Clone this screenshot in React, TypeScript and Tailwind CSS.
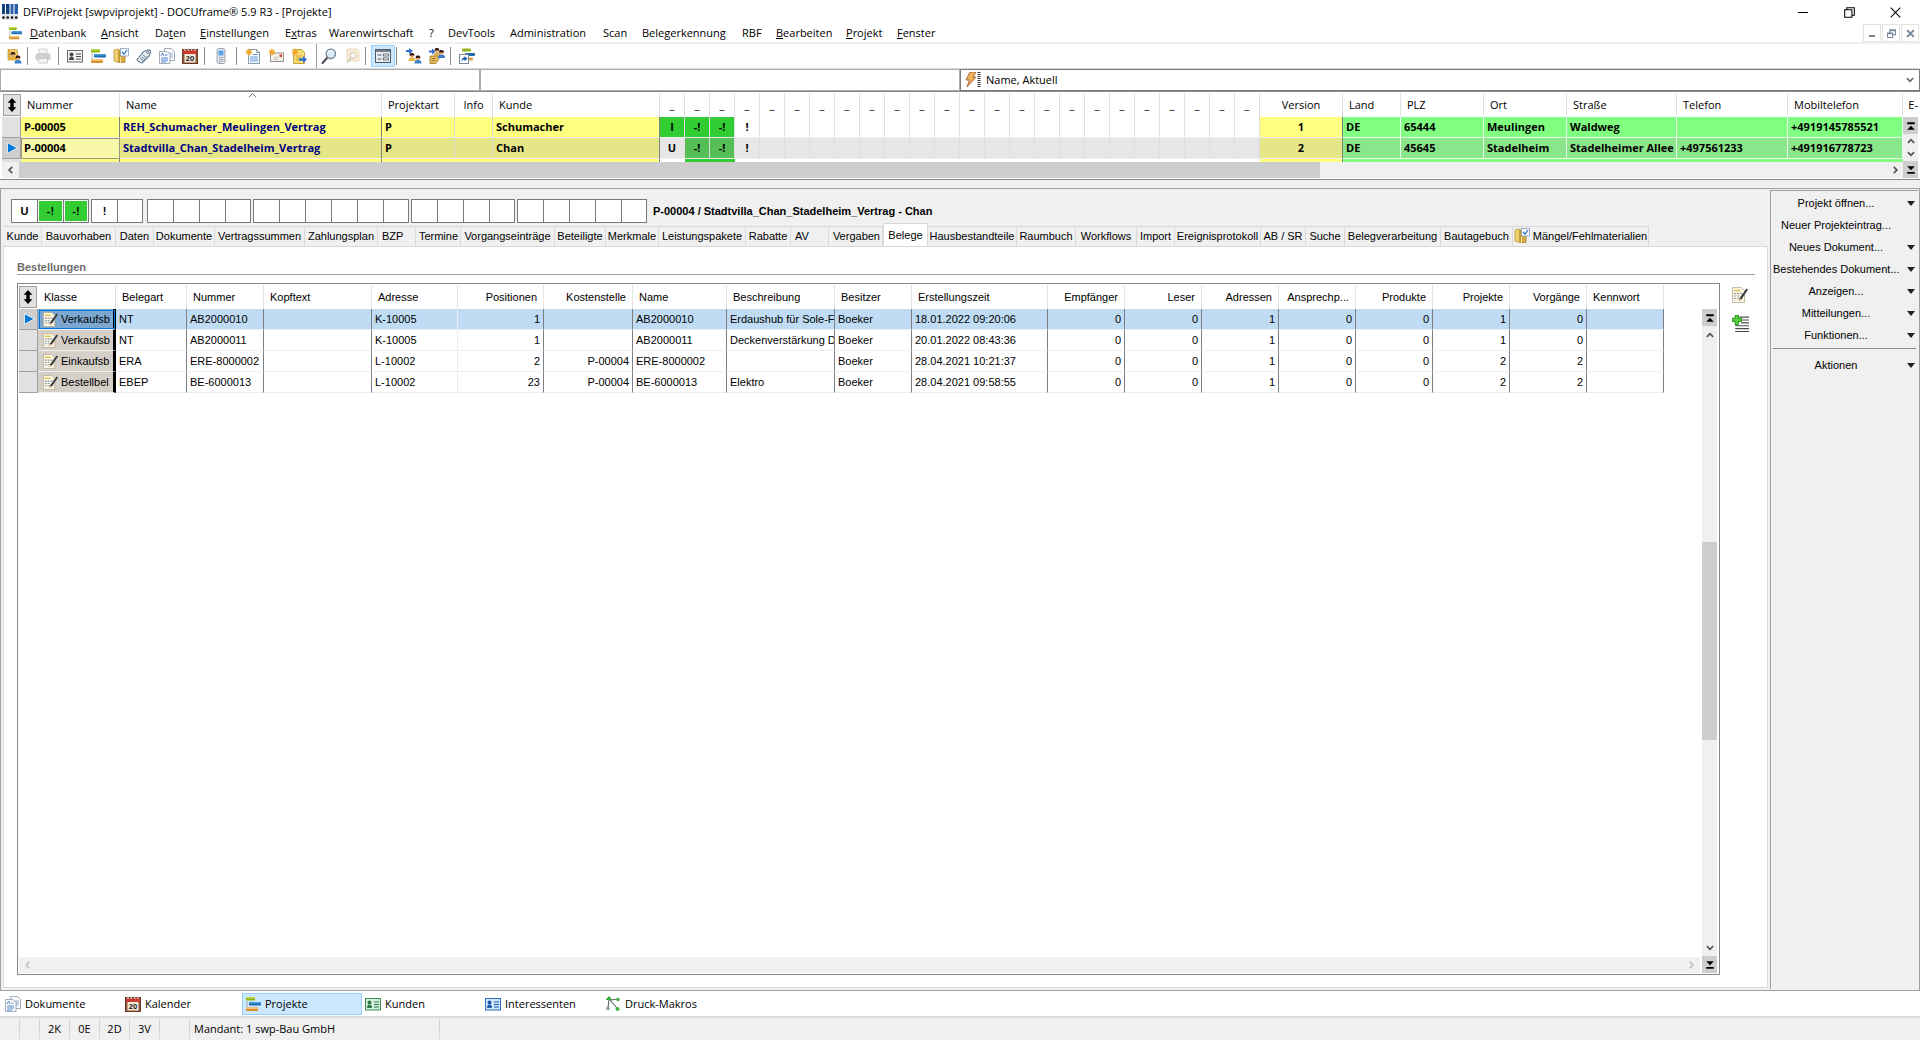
import type { ReactNode } from "react";

type Draw = { className?: string };

function Svg({ children, className = "size-4" }: { children: ReactNode; className?: string }) {
  return (
    <svg viewBox="0 0 16 16" className={`shrink-0 ${className}`} fill="none" aria-hidden="true">
      {children}
    </svg>
  );
}

/* ---------- icons ---------- */

const LogoIcon = () => (
  <Svg className="h-4 w-4">
    <path d="M0 0h3v10H0zM4 0h3.500v10H4z" fill="#15407f" />
    <path d="M8.500 0h3v10h-3zM12.500 0H16v10h-3.500z" fill="#2a5fae" />
    <path d="M0 10h16v6H0z" fill="#dfe3ea" />
    <circle cx="1.500" cy="13.500" r="1.300" fill="#111" />
    <circle cx="5.700" cy="13.500" r="1.300" fill="#111" />
    <circle cx="10" cy="13.500" r="1.300" fill="#111" />
    <circle cx="14.200" cy="13.500" r="1.300" fill="#111" />
  </Svg>
);

const ProjectsIcon = ({ className }: Draw) => (
  <Svg className={className}>
    <rect x="1" y="1" width="9" height="3.500" rx="1" fill="#8fb51c" />
    <rect x="1" y="1" width="9" height="1.500" rx="0.700" fill="#c3d94a" />
    <rect x="4" y="6" width="12" height="3.500" rx="1" fill="#1c6cae" />
    <rect x="4" y="6" width="12" height="1.500" rx="0.700" fill="#4a9fd8" />
    <path d="M2 5v8" stroke="#9aa3ad" strokeWidth="0.800" />
    <rect x="1" y="11.500" width="12" height="3.500" rx="1" fill="#d98e2b" />
    <rect x="1" y="11.500" width="12" height="1.500" rx="0.700" fill="#f2c377" />
  </Svg>
);

const Person = ({ x, y, shirt, hair = "#2e1a10" }: { x: number; y: number; shirt: string; hair?: string }) => (
  <g transform={`translate(${x} ${y})`}>
    <path d="M0 8c0-3 1.500-3.500 3.500-3.500S7 5 7 8z" fill={shirt} />
    <circle cx="3.500" cy="2.800" r="2" fill="#e3a878" />
    <path d="M1.200 3C.8.500 2 0 3.600 0S6.200.8 5.800 3C5 1.600 3 2.200 1.200 3z" fill={hair} />
  </g>
);

const LoginIcon = () => (
  <Svg>
    <path d="M2 1.500h8.500l1 1V12H2z" fill="#f0c766" stroke="#c2973a" strokeWidth="0.700" />
    <path d="M2 1.500h2V12H2z" fill="#d9a741" />
    <Person x={3.500} y={4} shirt="#e2b23a" />
    <Person x={8.500} y={7.500} shirt="#3f7fd0" />
  </Svg>
);

const PrinterIcon = () => (
  <Svg>
    <path d="M4 1h8v5H4z" fill="#f4f4f4" stroke="#c4c4c4" strokeWidth="0.800" />
    <rect x="1" y="6" width="14" height="6" rx="1.500" fill="#d2d2d2" stroke="#bcbcbc" strokeWidth="0.800" />
    <path d="M3.500 10.500h9V15h-9z" fill="#f3f3f3" stroke="#c4c4c4" strokeWidth="0.800" />
  </Svg>
);

const CardIcon = ({ fill = "#f2f2f2", edge = "#6d6d6d", ink = "#4a4a4a" }: { fill?: string; edge?: string; ink?: string }) => (
  <Svg>
    <rect x="0.500" y="2.500" width="15" height="11.500" fill={fill} stroke={edge} />
    <circle cx="4.500" cy="6.500" r="2" fill={ink} />
    <path d="M2 12c0-3 1-3.500 2.500-3.500S7 9 7 12z" fill={ink} />
    <path d="M9 6h5M9 8.500h5M9 11h5" stroke={ink} strokeWidth="1.200" />
  </Svg>
);

const FolderCheckIcon = () => (
  <Svg>
    <path d="M1 2l5-1v13.500l-5-1.500z" fill="#f0cf72" stroke="#b98d2a" strokeWidth="0.700" />
    <path d="M6 2.500h6v12H6z" fill="#d9a93c" stroke="#a87b1e" strokeWidth="0.700" />
    <path d="M7.500 9v6" stroke="#f7e3a3" />
    <rect x="7.500" y="0.500" width="8" height="7.500" fill="#f5faff" stroke="#8aa0b8" strokeWidth="0.800" />
    <path d="M9 4l2 2 3-4" stroke="#2670c0" strokeWidth="1.200" />
  </Svg>
);

const TagIcon = () => (
  <Svg>
    <path d="M1.500 11L8 3.500c1-1 5-2 6-1.500s0 5-1 6L6.500 14.500c-.6.600-1.500.6-2 0l-3-2c-.5-.400-.500-1 0-1.500z" fill="#eef3f8" stroke="#62788f" strokeWidth="1.100" />
    <circle cx="11.700" cy="4.500" r="1.200" fill="#fff" stroke="#4f6379" strokeWidth="0.900" />
    <path d="M4 10.500l3.500 2M5.500 9l3.500 2M7 7.200l3.500 2" stroke="#5f7890" strokeWidth="1" />
  </Svg>
);

const DocsIcon = () => (
  <Svg>
    <path d="M5.500.5h7l3 3v9h-10z" fill="#fbfcfe" stroke="#8b97a8" strokeWidth="0.800" />
    <path d="M9 5h5M9 7h5M9 9h5" stroke="#7aa0d0" strokeWidth="0.800" />
    <path d="M.5 3.500h7.500l3 3v9H.5z" fill="#fff" stroke="#8b97a8" strokeWidth="0.800" />
    <path d="M2 8l1.500-3L5 8M6 7h2.500M2 10h7M2 12h7M2 14h5" stroke="#3f6fc0" strokeWidth="0.900" />
    <path d="M6 10.500h3v3H6z" fill="#9fc0ea" />
  </Svg>
);

const CalendarIcon = () => (
  <Svg>
    <rect x="0.500" y="1.500" width="15" height="14" fill="#8f5a3f" stroke="#6b3a26" />
    <path d="M1 2h14v4H1z" fill="#c93b31" />
    <path d="M3 0v3M6.300 0v3M9.700 0v3M13 0v3" stroke="#d8d8d8" strokeWidth="1.200" />
    <path d="M2.500 6h11v8.500h-11z" fill="#f3ead9" />
    <text x="8" y="13" textAnchor="middle" fontSize="7.500" fontWeight="700" fill="#111" fontFamily="Liberation Sans">20</text>
  </Svg>
);

const PhoneIcon = () => (
  <Svg>
    <rect x="4" y="0.500" width="8" height="15" rx="2" fill="#e3e8ee" stroke="#9aa4b0" />
    <rect x="5.500" y="2.500" width="5" height="5" fill="#5aa2e6" />
    <path d="M6 9.500h1M7.600 9.500h1M9.200 9.500h1M6 11.500h1M7.600 11.500h1M9.200 11.500h1M6 13.300h1M7.600 13.300h1M9.200 13.300h1" stroke="#7d8896" />
  </Svg>
);

const Spark = () => (
  <path d="M4 0l.8 2.300L7 1.200 5.900 3.300 8 4.300l-2.200.8L6.800 7 4.700 6.100 4 8.300l-.8-2.200L1 7l1.100-2L0 4.300l2.100-.9L1 1.300l2.200 1z" fill="#f2a62a" />
);

const NewDocIcon = () => (
  <Svg>
    <path d="M3.500 1.500h8l3 3v11h-11z" fill="#fbfcfe" stroke="#7c8ba0" strokeWidth="0.900" />
    <path d="M11.500 1.500v3h3" stroke="#7c8ba0" strokeWidth="0.800" />
    <path d="M8 6.500h5M5 9h8M5 11h8M5 13h8" stroke="#5e97d6" />
    <Spark />
  </Svg>
);

const NewMailIcon = () => (
  <Svg>
    <rect x="2.500" y="5" width="13" height="8.500" fill="#f3f0ea" stroke="#9b9389" />
    <rect x="11.500" y="6.500" width="2.500" height="2.500" fill="#d0433a" />
    <path d="M6 9.500h4M6 11.300h4" stroke="#b5aea3" strokeWidth="0.800" />
    <Spark />
  </Svg>
);

const NewNoteIcon = () => (
  <Svg>
    <path d="M2.500 1.500h8l3 3v11h-11z" fill="#f7dc74" stroke="#c09a2b" strokeWidth="0.900" />
    <path d="M5 8h6M5 10h4M5 12h4" stroke="#c9a33a" />
    <path d="M8 10.300h4V8l4 3.500-4 3.500v-2.300H8z" fill="#2f6fce" />
    <Spark />
  </Svg>
);

const SearchIcon = () => (
  <Svg>
    <path d="M6.500 9.500L1.500 15" stroke="#4a4f57" strokeWidth="2" strokeLinecap="round" />
    <circle cx="9.800" cy="5.800" r="4.700" fill="#d9ecfb" stroke="#6b7f95" strokeWidth="1.300" />
    <path d="M7 5c.5-1.500 2-2.200 3.500-2" stroke="#fff" strokeWidth="1.200" />
  </Svg>
);

const SearchDocIcon = () => (
  <Svg>
    <path d="M3 1h10l2 2v10H3z" fill="#f8ecd2" stroke="#e6d6b4" strokeWidth="0.800" />
    <circle cx="9" cy="7.500" r="3" fill="#f6f6f2" stroke="#cfc9bb" />
    <path d="M6.800 10L3 14.500" stroke="#cfc9bb" strokeWidth="1.500" />
  </Svg>
);

const FormIcon = () => (
  <Svg>
    <rect x="0.500" y="1.500" width="15" height="13" fill="#e8eef4" stroke="#4f5a66" />
    <path d="M1 3h14" stroke="#4f5a66" strokeWidth="1.500" />
    <path d="M2.500 7h4M2.500 11h4" stroke="#4f5a66" />
    <rect x="8.500" y="6" width="5" height="2" fill="#fff" stroke="#4f5a66" strokeWidth="0.800" />
    <rect x="8.500" y="10" width="5" height="2" fill="#fff" stroke="#4f5a66" strokeWidth="0.800" />
  </Svg>
);

const TeamInIcon = () => (
  <Svg>
    <path d="M0 2h3V0l4 3-4 3V4H0z" fill="#2f6fce" />
    <Person x={2.500} y={5} shirt="#e5bb45" />
    <Person x={8.500} y={7.500} shirt="#3f7fd0" />
  </Svg>
);

const HandPeopleIcon = () => (
  <Svg>
    <path d="M1 8h7l3 1-4 6.500H1z" fill="#e3bb5c" stroke="#9b7425" strokeWidth="0.800" />
    <path d="M3 10.500h4M3 12.500h3" stroke="#9b7425" strokeWidth="0.800" />
    <path d="M0 2.500h3V.5l3.500 3-3.500 3v-2H0z" fill="#2f6fce" />
    <Person x={4.500} y={0} shirt="#d9a84a" />
    <Person x={9} y={2} shirt="#3f7fd0" />
  </Svg>
);

const ShortcutIcon = () => (
  <Svg>
    <rect x="3" y="0.500" width="9" height="3" rx="1" fill="#8fb51c" />
    <rect x="6" y="5" width="10" height="3" rx="1" fill="#1c6cae" />
    <rect x="8" y="9.500" width="6" height="3" rx="1" fill="#e0a350" />
    <rect x="0.500" y="6.500" width="9" height="9" fill="#fff" stroke="#7c8896" />
    <path d="M2.500 14c0-3 1-4.500 3-4.500V8l3 2.700-3 2.600v-1.700c-1.500 0-2.300.8-3 2.400z" fill="#1d5bb0" />
  </Svg>
);

const EditDocIcon = ({ className }: Draw) => (
  <Svg className={className}>
    <path d="M.5.500h9l3 3v12H.5z" fill="#fbf6e4" stroke="#b7ad92" strokeWidth="0.800" />
    <path d="M2 3.500h6" stroke="#e3c34b" strokeWidth="1.600" />
    <path d="M2 6.500h2M5 6.500h2M8 6.500h2M2 9h2M5 9h2M2 11.500h2M5 11.500h2" stroke="#8b98ad" strokeWidth="1.200" />
    <path d="M14.500 1.500l1.500 1.200-6.500 9.500-2.500 1.500.6-2.800z" fill="#3b3b3b" />
    <path d="M9.500 12.500L7 13.700l.5-2.500z" fill="#e0b070" />
  </Svg>
);

const AddLinesIcon = () => (
  <Svg className="size-[17px]">
    <path d="M7 2h9M9 4.700h7M8.500 7.400H16M3 10.100h13M3 12.800h13M3 15.500h13" stroke="#4c4c4c" strokeWidth="1.100" />
    <path d="M3 0h3v3h3v3H6v3H3V6H0V3h3z" fill="#55cf3a" stroke="#1f8a18" strokeWidth="0.900" />
  </Svg>
);

const MacroIcon = () => (
  <Svg>
    <path d="M4 3l-1 9M4 3l8 9M6 4l7-1" stroke="#58655c" strokeWidth="1.100" />
    <path d="M4 0l3.500 4h-7z" fill="#35a83c" />
    <circle cx="13" cy="3.500" r="1.800" fill="#43b24a" />
    <circle cx="3" cy="12.500" r="1.800" fill="#7ea886" />
    <circle cx="12.500" cy="13" r="2" fill="#43b24a" />
  </Svg>
);

const BoltIcon = () => (
  <Svg>
    <path d="M5 0h6L8 5h3L2 15l2.500-7H1z" fill="#f0b35a" stroke="#9c5a2c" strokeWidth="0.900" />
    <path d="M14 0v16" stroke="#333" strokeWidth="3" strokeDasharray="1 1" />
  </Svg>
);

const UpDownIcon = () => (
  <Svg className="h-[14px] w-[14px]">
    <path d="M8 0l5 5.500H10v5h3L8 16l-5-5.500h3v-5H3z" fill="#000" />
  </Svg>
);

const RowArrow = () => (
  <Svg className="size-3">
    <path d="M2 1l13 7-13 7z" fill="#0078d7" stroke="#fff" strokeWidth="1" />
  </Svg>
);

const Chevron = ({ d, color = "#505050" }: { d: "up" | "down" | "left" | "right"; color?: string }) => {
  const paths = { up: "M3 11l5-5 5 5", down: "M3 5l5 5 5-5", left: "M10 3L5 8l5 5", right: "M6 3l5 5-5 5" };
  return (
    <Svg className="size-[10px]">
      <path d={paths[d]} stroke={color} strokeWidth="2.600" />
    </Svg>
  );
};

const EndIcon = ({ bottom = false }: { bottom?: boolean }) => (
  <Svg className="size-[10px]">
    {bottom ? (
      <path d="M2 2h12L8 8.500zM2 11h12v3H2z" fill="#000" />
    ) : (
      <path d="M2 2h12v3H2zM8 7.500l6 6.500H2z" fill="#000" />
    )}
  </Svg>
);

/* ---------- data ---------- */

const menus: { w: string; pre: string; key?: string; post?: string }[] = [
  { w: "w-[71px]", pre: "", key: "D", post: "atenbank" },
  { w: "w-[54px]", pre: "", key: "A", post: "nsicht" },
  { w: "w-[45px]", pre: "Da", key: "t", post: "en" },
  { w: "w-[85px]", pre: "", key: "E", post: "instellungen" },
  { w: "w-[44px]", pre: "E", key: "x", post: "tras" },
  { w: "w-[100px]", pre: "Warenwirtschaft" },
  { w: "w-[19px]", pre: "?" },
  { w: "w-[62px]", pre: "DevTools" },
  { w: "w-[93px]", pre: "Administration" },
  { w: "w-[39px]", pre: "Scan" },
  { w: "w-[100px]", pre: "Belegerkennung" },
  { w: "w-[34px]", pre: "RBF" },
  { w: "w-[70px]", pre: "", key: "B", post: "earbeiten" },
  { w: "w-[51px]", pre: "", key: "P", post: "rojekt" },
  { w: "w-[60px]", pre: "", key: "F", post: "enster" },
];

const tabs: [string, string][] = [
  ["Kunde", "w-[38px]"],
  ["Bauvorhaben", "w-[74px]"],
  ["Daten", "w-[38px]"],
  ["Dokumente", "w-[61px]"],
  ["Vertragssummen", "w-[90px]"],
  ["Zahlungsplan", "w-[73px]"],
  ["BZP", "w-[38px]"],
  ["Termine", "w-[45px]"],
  ["Vorgangseinträge", "w-[94px]"],
  ["Beteiligte", "w-[51px]"],
  ["Merkmale", "w-[53px]"],
  ["Leistungspakete", "w-[87px]"],
  ["Rabatte", "w-[45px]"],
  ["AV", "w-[38px]"],
  ["Vergaben", "w-[54px]"],
  ["Belege", "w-[45px]"],
  ["Hausbestandteile", "w-[89px]"],
  ["Raumbuch", "w-[59px]"],
  ["Workflows", "w-[61px]"],
  ["Import", "w-[38px]"],
  ["Ereignisprotokoll", "w-[86px]"],
  ["AB / SR", "w-[45px]"],
  ["Suche", "w-[39px]"],
  ["Belegverarbeitung", "w-[96px]"],
  ["Bautagebuch", "w-[72px]"],
  ["Mängel/Fehlmaterialien", "w-[136px]"],
];
const leftTabs = ["BZP", "AV"];
const rightTabs = ["Termine", "Vergaben"];

const orderCols: { t: string; w: string; num?: boolean; soft?: boolean }[] = [
  { t: "Belegart", w: "w-[71px]" },
  { t: "Nummer", w: "w-[77px]" },
  { t: "Kopftext", w: "w-[108px]" },
  { t: "Adresse", w: "w-[86px]", soft: true },
  { t: "Positionen", w: "w-[86px]", num: true },
  { t: "Kostenstelle", w: "w-[89px]", num: true },
  { t: "Name", w: "w-[94px]" },
  { t: "Beschreibung", w: "w-[108px]" },
  { t: "Besitzer", w: "w-[77px]" },
  { t: "Erstellungszeit", w: "w-[136px]" },
  { t: "Empfänger", w: "w-[77px]", num: true },
  { t: "Leser", w: "w-[77px]", num: true },
  { t: "Adressen", w: "w-[77px]", num: true },
  { t: "Ansprechp...", w: "w-[77px]", num: true },
  { t: "Produkte", w: "w-[77px]", num: true },
  { t: "Projekte", w: "w-[77px]", num: true },
  { t: "Vorgänge", w: "w-[77px]", num: true },
  { t: "Kennwort", w: "w-[77px]" },
];

const orders: string[][] = [
  ["Verkaufsb", "NT", "AB2000010", "", "K-10005", "1", "", "AB2000010", "Erdaushub für Sole-F", "Boeker", "18.01.2022 09:20:06", "0", "0", "1", "0", "0", "1", "0", ""],
  ["Verkaufsb", "NT", "AB2000011", "", "K-10005", "1", "", "AB2000011", "Deckenverstärkung D", "Boeker", "20.01.2022 08:43:36", "0", "0", "1", "0", "0", "1", "0", ""],
  ["Einkaufsb", "ERA", "ERE-8000002", "", "L-10002", "2", "P-00004", "ERE-8000002", "", "Boeker", "28.04.2021 10:21:37", "0", "0", "1", "0", "0", "2", "2", ""],
  ["Bestellbel", "EBEP", "BE-6000013", "", "L-10002", "23", "P-00004", "BE-6000013", "Elektro", "Boeker", "28.04.2021 09:58:55", "0", "0", "1", "0", "0", "2", "2", ""],
];

const flagColumns = Array.from({ length: 24 }, (_, i) => i);

const projects = [
  { nr: "P-00005", name: "REH_Schumacher_Meulingen_Vertrag", kunde: "Schumacher", flags: ["I", "-!", "-!", "!"], version: "1", addr: ["DE", "65444", "Meulingen", "Waldweg", "", "+4919145785521"] },
  { nr: "P-00004", name: "Stadtvilla_Chan_Stadelheim_Vertrag", kunde: "Chan", flags: ["U", "-!", "-!", "!"], version: "2", addr: ["DE", "45645", "Stadelheim", "Stadelheimer Allee", "+497561233", "+491916778723"] },
];

const flagGroups: string[][] = [
  ["U", "-!", "-!"],
  ["!", ""],
  ["", "", "", ""],
  ["", "", "", "", "", ""],
  ["", "", "", ""],
  ["", "", "", "", ""],
];

const actions: [string, boolean][] = [
  ["Projekt öffnen...", true],
  ["Neuer Projekteintrag...", false],
  ["Neues Dokument...", true],
  ["Bestehendes Dokument...", true],
  ["Anzeigen...", true],
  ["Mitteilungen...", true],
  ["Funktionen...", true],
];

/* ---------- parts ---------- */

const Sep = () => <span className="h-[18px] w-px shrink-0 bg-[#8c8c8c]" />;

function Tool({ label, w = "w-[23px]", children }: { label: string; w?: string; children: ReactNode }) {
  return (
    <button type="button" aria-label={label} className={`flex h-6 shrink-0 items-center justify-center ${w}`}>
      {children}
    </button>
  );
}

function TitleBar() {
  return (
    <header className="flex h-6 items-center pl-[2px] pr-[2px]">
      <LogoIcon />
      <h1 className="flex-1 pl-[5px] font-['Open_Sans',sans-serif] text-[11px]">
        DFViProjekt [swpviprojekt] - DOCUframe® 5.9 R3 - [Projekte]
      </h1>
      <button type="button" aria-label="Minimieren" className="flex h-5 w-[46px] items-center justify-center">
        <span className="h-px w-[10px] bg-black" />
      </button>
      <button type="button" aria-label="Wiederherstellen" className="flex h-5 w-[46px] items-center justify-center">
        <Svg className="size-[11px]">
          <path d="M1 4h10.500v11H1zM4 4V1h11v11h-3.500" stroke="#000" strokeWidth="1.500" />
        </Svg>
      </button>
      <button type="button" aria-label="Schließen" className="flex h-5 w-[46px] items-center justify-center">
        <Svg className="size-[11px]">
          <path d="M1 1l14 14M15 1L1 15" stroke="#000" strokeWidth="1.500" />
        </Svg>
      </button>
    </header>
  );
}

function MenuBar() {
  return (
    <nav className="flex h-5 items-center border-b-2 border-[#f0f0f0] pl-2 font-['Open_Sans',sans-serif] text-[11px]">
      <ProjectsIcon className="size-[14px]" />
      <span className="w-2" />
      {menus.map((m) => (
        <button key={m.pre + m.key + m.post} type="button" className={`shrink-0 text-left ${m.w}`}>
          {m.pre}
          {m.key && <span className="underline">{m.key}</span>}
          {m.post}
        </button>
      ))}
      <span className="flex-1" />
      <button type="button" aria-label="Fenster minimieren" className="flex h-[18px] w-[18px] items-end justify-center border border-[#e3e3e3] pb-1">
        <span className="h-[2px] w-[6px] bg-[#76879b]" />
      </button>
      <button type="button" aria-label="Fenster wiederherstellen" className="ml-px flex h-[18px] w-[18px] items-center justify-center border border-[#e3e3e3]">
        <Svg className="size-[9px]">
          <path d="M1 7h9v8H1zM1 8.500h9M5 6V1.500h10V10h-4M5 3h10" stroke="#76879b" strokeWidth="1.800" />
        </Svg>
      </button>
      <button type="button" aria-label="Fenster schließen" className="ml-px mr-px flex h-[18px] w-[18px] items-center justify-center border border-[#e3e3e3]">
        <Svg className="size-[9px]">
          <path d="M2 2l12 12M14 2L2 14" stroke="#76879b" strokeWidth="3.600" />
        </Svg>
      </button>
    </nav>
  );
}

function ToolBar() {
  return (
    <div role="toolbar" className="flex h-[25px] items-center border-b border-[#d9d9d9]">
      <Tool label="Anmelden" w="w-[27px]"><LoginIcon /></Tool>
      <Sep />
      <Tool label="Drucken" w="w-[30px]"><PrinterIcon /></Tool>
      <Sep />
      <span className="w-1" />
      <Tool label="Adressen"><CardIcon /></Tool>
      <Tool label="Projekte"><ProjectsIcon /></Tool>
      <Tool label="Aufgaben"><FolderCheckIcon /></Tool>
      <Tool label="Etiketten"><TagIcon /></Tool>
      <Tool label="Dokumente"><DocsIcon /></Tool>
      <Tool label="Kalender"><CalendarIcon /></Tool>
      <span className="w-[3px]" />
      <Sep />
      <Tool label="Telefon" w="w-[31px]"><PhoneIcon /></Tool>
      <Sep />
      <span className="w-1" />
      <Tool label="Neues Dokument"><NewDocIcon /></Tool>
      <Tool label="Neue Nachricht"><NewMailIcon /></Tool>
      <Tool label="Neue Notiz"><NewNoteIcon /></Tool>
      <span className="w-[6px]" />
      <span className="h-full w-px bg-[#a0a0a0]" />
      <Tool label="Suchen"><SearchIcon /></Tool>
      <Tool label="Dokument suchen"><SearchDocIcon /></Tool>
      <span className="w-[2px]" />
      <Sep />
      <button type="button" aria-label="Formularansicht" aria-pressed="true" className="ml-[5px] mr-px flex h-[22px] w-6 shrink-0 items-center justify-center border border-[#99d1ff] bg-[#cce8ff]">
        <FormIcon />
      </button>
      <Sep />
      <span className="w-[5px]" />
      <Tool label="Team zuordnen"><TeamInIcon /></Tool>
      <Tool label="Übergeben"><HandPeopleIcon /></Tool>
      <span className="w-[2px]" />
      <Sep />
      <Tool label="Verknüpfung" w="w-[31px]"><ShortcutIcon /></Tool>
    </div>
  );
}

function FilterBar() {
  return (
    <div className="grid h-[22px] grid-cols-4">
      <input aria-label="Suche Nummer" className="min-w-0 border border-[#a9a9b0] bg-white px-1 text-[11px]" />
      <input aria-label="Suche Name" className="min-w-0 border border-[#a9a9b0] bg-white px-1 text-[11px]" />
      <label className="relative col-span-2 flex items-center border border-[#7b7b7b] bg-white pl-1">
        <BoltIcon />
        <select aria-label="Sortierung" className="h-full flex-1 appearance-none bg-white pl-[5px] font-['Open_Sans',sans-serif] text-[11px]">
          <option>Name, Aktuell</option>
        </select>
        <span className="pointer-events-none absolute right-1 flex">
          <Chevron d="down" color="#666" />
        </span>
      </label>
    </div>
  );
}

const headCell = "relative border-r border-[#e0e0e0] bg-white px-[6px] font-normal whitespace-nowrap";

function ProjectGrid() {
  return (
    <section className="flex border-y border-[#828790] px-[2px] pb-px pt-px font-['Open_Sans',sans-serif] text-[11px]">
      <div className="min-w-0 flex-1">
        <div className="h-[69px] overflow-hidden">
          <table className="w-[1901px] table-fixed border-separate border-spacing-0">
            <colgroup>
              <col className="w-[19px]" />
              <col className="w-[99px]" />
              <col className="w-[262px]" />
              <col className="w-[73px]" />
              <col className="w-[38px]" />
              <col className="w-[167px]" />
              {flagColumns.map((i) => <col key={i} className="w-[25px]" />)}
              <col className="w-[83px]" />
              <col className="w-[58px]" />
              <col className="w-[83px]" />
              <col className="w-[83px]" />
              <col className="w-[110px]" />
              <col className="w-[111px]" />
              <col className="w-[115px]" />
            </colgroup>
            <thead>
              <tr className="h-6 text-left">
                <th className="p-0">
                  <button type="button" aria-label="Spalten" className="mx-auto flex h-[22px] w-[18px] items-center justify-center border border-[#a0a0a0] bg-[#e1e1e1]">
                    <UpDownIcon />
                  </button>
                </th>
                <th className={headCell}>Nummer</th>
                <th className={headCell}>
                  Name
                  <svg viewBox="0 0 10 5" className="absolute left-32 top-0 h-[5px] w-[9px]" fill="none" aria-hidden="true">
                    <path d="M1 4.500l4-4 4 4" stroke="#555" />
                  </svg>
                </th>
                <th className={headCell}>Projektart</th>
                <th className="relative border-r border-[#e0e0e0] text-center font-normal">Info</th>
                <th className={headCell}>Kunde</th>
                {flagColumns.map((i) => (
                  <th key={i} className="border-r border-[#e0e0e0] p-0 text-center font-normal">_</th>
                ))}
                <th className="border-r border-[#e0e0e0] p-0 text-center font-normal">Version</th>
                {["Land", "PLZ", "Ort", "Straße", "Telefon", "Mobiltelefon"].map((t) => (
                  <th key={t} className={headCell}>{t}</th>
                ))}
              </tr>
            </thead>
            <tbody>
              {projects.map((p, r) => {
                const sel = r === 1;
                const y = sel ? "bg-[#e6e687]" : "bg-[#ffff80]";
                const g = sel ? "bg-[#8ae68a]" : "bg-[#80ff80]";
                const f = sel ? "bg-[#55be55]" : "bg-[#32cd32]";
                const plain = sel ? "bg-[#e6e6e6]" : "bg-white";
                const cell = "overflow-hidden whitespace-nowrap border-b border-b-[#f0f0f0] border-r px-[3px] py-0";
                const soft = "border-r-[#dcdcd0]";
                const hard = "border-r-[#80807a]";
                return (
                  <tr key={p.nr} className="h-[21px] font-bold">
                    <td className={`border-b border-r border-[#a0a0a0] p-0 ${sel ? "bg-[#cdcdcd] pl-1" : "bg-[#e1e1e1]"}`}>{sel && <RowArrow />}</td>
                    <td className={`${cell} ${hard} ${sel ? "bg-[#f8f8a8] outline -outline-offset-1 outline-[#9a9a80]" : y}`}>{p.nr}</td>
                    <td className={`${cell} ${hard} ${y} text-[#000080]`}>{p.name}</td>
                    <td className={`${cell} ${soft} ${y}`}>P</td>
                    <td className={`${cell} ${soft} ${y}`} />
                    <td className={`${cell} ${hard} ${y}`}>{p.kunde}</td>
                    {flagColumns.map((i) => {
                      const text = p.flags[i] ?? "";
                      const green = text === "-!" || text === "I";
                      return (
                        <td key={i} className={`border-b border-r border-b-[#f0f0f0] border-r-[#dfdfe4] p-0 text-center ${green ? f : plain}`}>{text}</td>
                      );
                    })}
                    <td className={`${cell} ${hard} ${y} text-center`}>{p.version}</td>
                    {p.addr.map((a, i) => (
                      <td key={i} className={`${cell} border-r-[#e8ffe8] ${g}`}>{a}</td>
                    ))}
                  </tr>
                );
              })}
              <tr className="h-[3px]" aria-hidden="true">
                <td className="bg-[#e1e1e1] p-0" />
                <td className="border-r border-[#80807a] bg-[#ffff80] p-0" />
                <td className="border-r border-[#80807a] bg-[#ffff80] p-0" />
                <td colSpan={3} className="border-r border-[#80807a] bg-[#ffff80] p-0" />
                <td className="p-0" />
                <td colSpan={2} className="bg-[#32cd32] p-0" />
                <td colSpan={21} className="p-0" />
                <td className="border-r border-[#80807a] bg-[#ffff80] p-0" />
                <td colSpan={6} className="bg-[#80ff80] p-0" />
              </tr>
            </tbody>
          </table>
        </div>
        <div className="flex h-4 items-stretch bg-[#f0f0f0]">
          <button type="button" aria-label="Nach links" className="flex w-[17px] items-center justify-center"><Chevron d="left" /></button>
          <div className="flex flex-1">
            <div className="grow-[697] bg-[#cdcdcd]" />
            <div className="grow-[303]" />
          </div>
          <button type="button" aria-label="Nach rechts" className="flex w-[17px] items-center justify-center"><Chevron d="right" /></button>
        </div>
      </div>
      <div className="flex w-[15px] shrink-0 flex-col bg-[#f0f0f0]">
        <div className="flex h-6 items-center justify-end whitespace-nowrap bg-white">E-</div>
        <button type="button" aria-label="Zum Anfang" className="flex h-[17px] items-center justify-center bg-[#cdcdcd]"><EndIcon /></button>
        <button type="button" aria-label="Nach oben" className="flex flex-1 items-center justify-center"><Chevron d="up" /></button>
        <button type="button" aria-label="Nach unten" className="flex flex-1 items-center justify-center"><Chevron d="down" /></button>
        <button type="button" aria-label="Zum Ende" className="flex h-[17px] items-center justify-center bg-[#cdcdcd]"><EndIcon bottom /></button>
      </div>
    </section>
  );
}

function FlagStrip() {
  return (
    <div className="flex items-center pl-2 pt-[9px] text-[11px] font-bold">
      {flagGroups.map((g, gi) => (
        <div key={gi} className={`flex ${gi === 1 ? "mr-1" : "mr-[2px]"}`}>
          {g.map((t, i) => (
            <div key={i} className={`h-6 w-[26px] border-y border-l border-[#7a7a7a] bg-white p-px ${i === g.length - 1 ? "border-r" : ""}`}>
              <div className={`flex h-full items-center justify-center ${t === "-!" ? "bg-[#32cd32]" : ""}`}>{t}</div>
            </div>
          ))}
        </div>
      ))}
      <h2 className="pl-1">P-00004 / Stadtvilla_Chan_Stadelheim_Vertrag - Chan</h2>
    </div>
  );
}

function TabStrip() {
  return (
    <div role="tablist" className="flex h-[23px] items-end pl-px">
      {tabs.map(([name, w]) => {
        if (name === "Belege") {
          return (
            <button key={name} type="button" role="tab" aria-selected="true" className={`-mb-px flex h-6 shrink-0 items-center justify-center border border-b-0 border-[#d9d9d9] bg-white pb-[2px] ${w}`}>
              {name}
            </button>
          );
        }
        const align = leftTabs.includes(name) ? "justify-start pl-1" : rightTabs.includes(name) ? "justify-end pr-[2px]" : "justify-center";
        return (
          <button key={name} type="button" role="tab" aria-selected="false" className={`flex h-5 shrink-0 items-center gap-[3px] whitespace-nowrap border-r border-t border-[#d9d9d9] pb-px ${align} ${w}`}>
            {name.startsWith("Mängel") && <FolderCheckIcon />}
            {name}
          </button>
        );
      })}
    </div>
  );
}

function OrderTable() {
  return (
    <table className="w-[1645px] table-fixed border-separate border-spacing-0">
      <colgroup>
        <col className="w-[19px]" />
        <col className="w-[78px]" />
        {orderCols.map((c) => <col key={c.t} className={c.w} />)}
      </colgroup>
      <thead>
        <tr className="h-6 text-left">
          <th className="p-0">
            <button type="button" aria-label="Spalten" className="flex h-[22px] w-[18px] items-center justify-center border border-[#a0a0a0] bg-[#e1e1e1]">
              <UpDownIcon />
            </button>
          </th>
          <th className={headCell}>Klasse</th>
          {orderCols.map((c) => (
            <th key={c.t} className={`border-r border-[#e5e5e5] px-[6px] py-0 font-normal ${c.num ? "text-right" : ""}`}>{c.t}</th>
          ))}
        </tr>
      </thead>
      <tbody>
        {orders.map((row, r) => (
          <tr key={row[2]} className={`h-[21px] ${r === 0 ? "bg-[#bfdcf4]" : "bg-white"}`}>
            <td className={`border-b border-r border-[#a0a0a0] p-0 ${r === 0 ? "bg-[#cdcdcd] pl-1" : "bg-[#e1e1e1]"}`}>{r === 0 && <RowArrow />}</td>
            <td className={`border-b border-r-[3px] border-b-[#f0f0f0] border-r-black py-0 pl-[5px] pr-[3px] ${r === 0 ? "bg-[#7ba7d0] outline -outline-offset-2 outline-[#0078d7]" : "bg-[#d4d0c8]"}`}>
              <div className="flex h-[18px] items-center gap-[3px] overflow-hidden whitespace-nowrap">
                <EditDocIcon className="size-[15px]" />
                {row[0]}
              </div>
            </td>
            {orderCols.map((c, i) => (
              <td
                key={c.t}
                className={`overflow-hidden whitespace-nowrap border-b border-r border-b-[#ededed] px-[3px] py-0 ${c.num ? "text-right" : ""} ${c.soft ? "border-r-[#ededed]" : "border-r-[#7f7f86]"}`}
              >
                {row[i + 1]}
              </td>
            ))}
          </tr>
        ))}
      </tbody>
    </table>
  );
}

function OrdersPanel() {
  return (
    <div className="mb-px mr-[2px] flex flex-1 flex-col border border-[#d9d9d9] bg-white pb-3 pl-[13px] pr-3">
      <h3 className="flex h-7 items-center border-b border-[#a0a0a0] pt-3 text-[11px] font-bold text-[#6d6d6d]">Bestellungen</h3>
      <div className="flex flex-1 pt-2">
        <div className="flex min-w-0 flex-1 border border-[#828790] p-px">
          <div className="flex min-w-0 flex-1 flex-col overflow-hidden">
            <OrderTable />
            <div className="flex-1" />
            <div className="mr-[2px] flex h-4 items-center justify-between bg-[#f0f0f0] px-1">
              <button type="button" aria-label="Nach links" className="flex"><Chevron d="left" color="#bfbfbf" /></button>
              <button type="button" aria-label="Nach rechts" className="flex"><Chevron d="right" color="#bfbfbf" /></button>
            </div>
          </div>
          <div className="flex w-4 shrink-0 flex-col pr-px pt-6">
            <div className="flex flex-1 flex-col bg-[#f0f0f0]">
              <button type="button" aria-label="Zum Anfang" className="flex h-[17px] items-center justify-center bg-[#cdcdcd]"><EndIcon /></button>
              <button type="button" aria-label="Nach oben" className="flex h-[17px] items-center justify-center"><Chevron d="up" /></button>
              <div className="grow" />
              <div className="grow bg-[#cdcdcd]" />
              <div className="grow" />
              <button type="button" aria-label="Nach unten" className="flex h-[17px] items-center justify-center"><Chevron d="down" /></button>
              <button type="button" aria-label="Zum Ende" className="flex h-[17px] items-center justify-center bg-[#cdcdcd]"><EndIcon bottom /></button>
            </div>
          </div>
        </div>
        <div className="flex w-[35px] flex-col items-start gap-3 pl-3 pt-1">
          <button type="button" aria-label="Bearbeiten"><EditDocIcon className="size-4" /></button>
          <button type="button" aria-label="Position hinzufügen"><AddLinesIcon /></button>
        </div>
      </div>
    </div>
  );
}

function ActionItem({ label, arrow }: { label: string; arrow: boolean }) {
  return (
    <button type="button" className="flex h-[22px] w-full items-center pl-[2px]">
      <span className="w-[126px] whitespace-nowrap text-center">{label}</span>
      {arrow && (
        <svg viewBox="0 0 8 5" className="ml-2 h-[5px] w-2" aria-hidden="true">
          <path d="M0 0h8L4 5z" fill="#222" />
        </svg>
      )}
    </button>
  );
}

function ShortcutBar() {
  const items: [string, ReactNode][] = [
    ["Dokumente", <DocsIcon />],
    ["Kalender", <CalendarIcon />],
    ["Projekte", <ProjectsIcon />],
    ["Kunden", <CardIcon fill="#d5f0dc" edge="#3f8f56" ink="#2c7a45" />],
    ["Interessenten", <CardIcon fill="#d3e6fb" edge="#2b6fc0" ink="#1c5cad" />],
    ["Druck-Makros", <MacroIcon />],
  ];
  return (
    <nav className="flex h-[25px] items-center pl-[2px] font-['Open_Sans',sans-serif] text-[11px]">
      {items.map(([name, icon]) => (
        <button
          key={name}
          type="button"
          className={`flex h-[22px] w-[120px] items-center gap-1 border pl-[2px] ${name === "Projekte" ? "border-[#99d1ff] bg-[#cce8ff]" : "border-transparent"}`}
        >
          {icon}
          {name}
        </button>
      ))}
    </nav>
  );
}

function StatusBar() {
  const cell = "flex h-full w-[30px] items-center justify-center border-r border-[#d5d5d5]";
  return (
    <footer className="flex h-6 items-center border-t-2 border-[#d9d9d9] bg-[#f0f0f0] py-px font-['Open_Sans',sans-serif] text-[11px]">
      <span className="h-full w-5 border-r border-[#d5d5d5]" />
      <span className="h-full w-5 border-r border-[#d5d5d5]" />
      {["2K", "0E", "2D", "3V", ""].map((t, i) => (
        <span key={i} className={cell}>{t}</span>
      ))}
      <span className="flex h-full w-[250px] items-center border-r border-[#d5d5d5] pl-1">Mandant: 1 swp-Bau GmbH</span>
    </footer>
  );
}

export default function App() {
  return (
    <div className="flex min-h-screen w-full flex-col overflow-hidden bg-white font-['Liberation_Sans',Arial,sans-serif] text-[11px] leading-4 text-black">
      <TitleBar />
      <MenuBar />
      <ToolBar />
      <FilterBar />
      <ProjectGrid />
      <div className="h-2 bg-[#f0f0f0]" />
      <main className="flex flex-1 border border-[#a0a0a0] bg-[#f0f0f0] p-px">
        <div className="flex min-w-0 flex-1 flex-col pl-px">
          <FlagStrip />
          <TabStrip />
          <OrdersPanel />
        </div>
        <aside className="w-[148px] shrink-0 border-l border-t border-[#a0a0a0] pt-px">
          {actions.map(([label, arrow]) => (
            <ActionItem key={label} label={label} arrow={arrow} />
          ))}
          <hr className="mx-[2px] mb-[5px] mt-[2px] border-[#8a8a8a]" />
          <ActionItem label="Aktionen" arrow />
        </aside>
      </main>
      <ShortcutBar />
      <StatusBar />
    </div>
  );
}
